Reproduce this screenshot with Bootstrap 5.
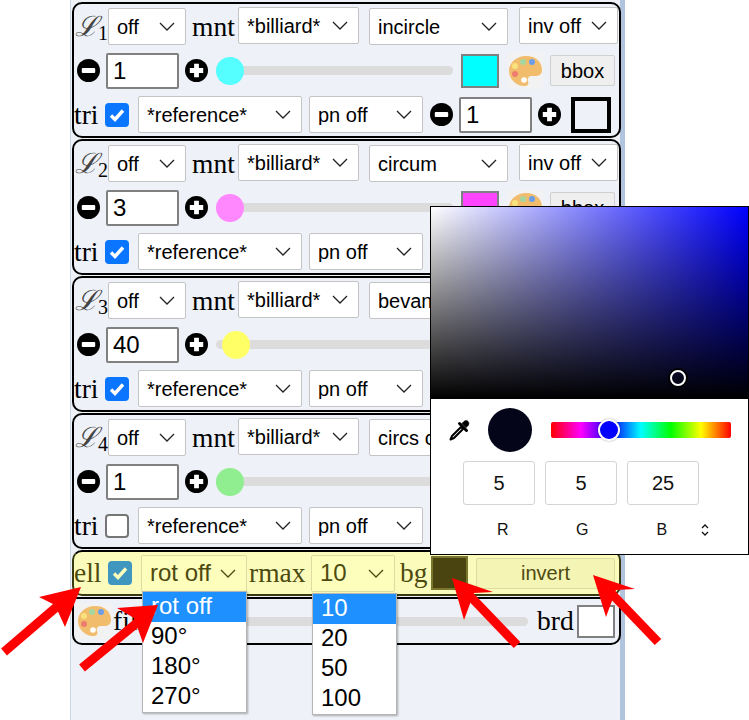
<!DOCTYPE html>
<html lang="en">
  <head>
    <meta charset="UTF-8" />
    <meta name="viewport" content="width=device-width, initial-scale=1.0" />
    <title>Locus controls</title>
    <link
      href="https://cdn.jsdelivr.net/npm/bootstrap@5.3.0/dist/css/bootstrap.min.css"
      rel="stylesheet"
    />
    <style>
      body {
        margin: 0;
        background: #fff;
        overflow: hidden;
        font-family: "Liberation Sans", Arial, sans-serif;
      }
      .stage { position: relative; width: 749px; height: 720px; overflow: hidden; }
      .sidebar {
        margin-left: 70px;
        width: 555px;
        height: 720px;
        padding: 2px 0 0 1px;
        background: #eef1f7;
        border-left: 1px solid #c9d6ea;
        border-right: 5px solid #b0c4de;
      }
      .locus {
        width: 549px;
        height: 136px;
        margin-bottom: 1px;
        padding: 4px 0 0 0;
        border: 2px solid #000;
        border-radius: 10px;
        display: flex;
        flex-direction: column;
        gap: 7px;
      }
      .ctl-row { height: 37px; display: flex; align-items: center; flex: none; }
      .serif-lbl { font-family: "Liberation Serif", "Times New Roman", serif; font-size: 27.5px; line-height: 1; color: #000; }
      .locus-name { width: 34px; padding-left: 1px; white-space: nowrap; }
      .locus-name i { font-family: "DejaVu Serif", serif; font-size: 28px; color: #444; }
      .locus-name sub { font-size: 20px; bottom: -.2em; }

      .form-select.pick {
        height: 37px;
        flex: none;
        padding: 0 24px 0 8px;
        font-size: 20px;
        line-height: 1;
        color: #000;
        border: 1px solid #c4c4c4;
        border-radius: 2px;
        background-size: 16px 9px;
        background-position: right 10px center;
        background-image: url("data:image/svg+xml,%3csvg xmlns='http://www.w3.org/2000/svg' viewBox='0 0 16 9'%3e%3cpath fill='none' stroke='%23222' stroke-width='1.3' d='M1 1l7 7 7-7'/%3e%3c/svg%3e");
      }
      .sel-on { width: 78px; }
      .sel-mount { width: 121px; margin-right: 10px; transform: translateY(-1px); }
      .sel-kind { width: 139px; margin-right: 11px; }
      .sel-inv { width: 99px; transform: translateY(-1px); }
      .sel-ref { width: 164px; margin-right: 7px; }
      .sel-pn { width: 114px; margin-right: 7px; }
      .mnt-lbl { margin: 0 4px 0 6px; width: 42px; }

      .stepper { flex: none; display: block; width: 23px; height: 23px; }
      .lead-step { margin-left: 3px; }
      .num-box.form-control {
        width: 73px;
        height: 36px;
        flex: none;
        margin: 0 6px;
        padding: 0 5px;
        font-size: 24px;
        color: #000;
        border: 2px solid #808080;
        border-radius: 2px;
      }
      .size-range {
        flex: none;
        appearance: none;
        -webkit-appearance: none;
        background: transparent;
        height: 28px;
        margin: 0;
      }
      .size-range::-webkit-slider-runnable-track { height: 9px; background: #dcdcdc; border-radius: 5px; }
      .size-range::-webkit-slider-thumb {
        -webkit-appearance: none;
        width: 28px;
        height: 28px;
        margin-top: -9.5px;
        border-radius: 50%;
        background: var(--thumb);
      }
      .locus .size-range { width: 237px; margin: 0 8px; }
      .th-cyan { --thumb: #55ffff; }
      .th-pink { --thumb: #ff88ff; }
      .th-yellow { --thumb: #ffff66; }
      .th-green { --thumb: #90ee90; }
      .th-grey { --thumb: #dcdcdc; }

      .swatch { flex: none; width: 38px; height: 34px; border: 2px solid #808080; }
      .sw-cyan { background: #00ffff; }
      .sw-pink { background: #ff44ff; }
      .paint { flex: none; width: 36px; height: 36px; display: block; background: #f2f2f2; }
      .swatch + .paint { margin-left: 8px; }
      .btn.bbox-btn {
        flex: none;
        width: 65px;
        height: 31px;
        padding: 0;
        margin-left: 7px;
        font-size: 20px;
        line-height: 1;
        color: #000;
        background: #efefef;
        border: 1px solid #d0d0d0;
        border-radius: 2px;
      }
      .tri-lbl { width: 31px; }
      .form-check-input.tick {
        flex: none;
        width: 24px;
        height: 24px;
        margin: 0 9px 0 0;
        border: 2px solid #767676;
        border-radius: 4px;
        background-color: #fff;
      }
      .form-check-input.tick:checked {
        background-color: #0a75ff;
        border-color: #0a75ff;
        background-size: 100% 100%;
        background-image: url("data:image/svg+xml,%3csvg xmlns='http://www.w3.org/2000/svg' viewBox='0 0 20 20'%3e%3cpath fill='none' stroke='%23fff' stroke-width='3.4' d='M4 10.500l4 4 8-9'/%3e%3c/svg%3e");
      }
      .edge-box { flex: none; width: 40px; height: 36px; margin-left: 10px; border: 4px solid #000; background: #eef1f7; }

      .ell-bar {
        width: 549px;
        height: 46px;
        display: flex;
        align-items: center;
        color: #4d4a10;
        background: #fbfcbb;
        border: 2px solid #3a3a10;
        border-top-color: #000;
        border-radius: 10px;
      }
      .ell-bar .serif-lbl { color: #4d4a10; }
      .ell-bar .form-select.pick {
        font-size: 24px;
        color: #4d4a10;
        background-color: #fdfdbc;
        border-color: #dcdca0;
        background-image: url("data:image/svg+xml,%3csvg xmlns='http://www.w3.org/2000/svg' viewBox='0 0 16 9'%3e%3cpath fill='none' stroke='%234d4a10' stroke-width='1.3' d='M1 1l7 7 7-7'/%3e%3c/svg%3e");
      }
      .ell-lbl { width: 34px; }
      .form-check-input.tick.ell-tick:checked {
        background-color: #3f96bf;
        border-color: #3f96bf;
        background-image: url("data:image/svg+xml,%3csvg xmlns='http://www.w3.org/2000/svg' viewBox='0 0 20 20'%3e%3cpath fill='none' stroke='%23fdfdbc' stroke-width='3.4' d='M4 10.500l4 4 8-9'/%3e%3c/svg%3e");
      }
      .sel-rot { width: 106px; }
      .rmax-lbl { margin: 0 5px 0 2px; width: 57px; }
      .sel-rmax { width: 84px; }
      .bg-lbl { margin: 0 4px 0 5px; width: 27px; }
      .bg-box { flex: none; width: 37px; height: 34px; background: #4a4510; border: 2px solid #7a7630; }
      .btn.inv-btn {
        flex: none;
        width: 139px;
        height: 31px;
        margin-left: 8px;
        padding: 0;
        font-size: 20px;
        line-height: 1;
        color: #4d4a10;
        background: #f4f4b4;
        border: 1px solid #dcdca0;
        border-radius: 2px;
      }
      .fill-bar {
        width: 549px;
        height: 48px;
        margin-top: 1px;
        padding-left: 2px;
        display: flex;
        align-items: center;
        border: 2px solid #000;
        border-radius: 0 0 10px 10px;
      }
      .fill-bar .size-range { width: 385px; margin-right: 9px; }
      .fill-lbl { width: 30px; margin-left: 1px; }
      .brd-lbl { width: 40px; }
      .brd-box { flex: none; width: 38px; height: 33px; background: #fff; border: 2px solid #808080; }

      /* popups of the open selects and colour picker */
      .fake-menu {
        position: absolute;
        background: #fff;
        border: 1px solid #b5b5b5;
        box-shadow: 1px 1px 2px rgba(0, 0, 0, .3);
        font-size: 24px;
        color: #000;
      }
      .fake-menu div { height: 30px; line-height: 28px; padding-left: 8px; }
      .fake-menu .on { background: #1e90ff; color: #fff; }
      .menu-rot { left: 142px; top: 591px; width: 105px; }
      .menu-rmax { left: 312px; top: 593px; width: 85px; }

      .picker {
        position: absolute;
        left: 430px;
        top: 206px;
        width: 319px;
        height: 349px;
        background: #fff;
        border: 1px solid #000;
      }
      .sv-field {
        position: relative;
        height: 192px;
        background: linear-gradient(to top, #000, transparent), linear-gradient(to right, #fff, #00f);
      }
      .sv-dot {
        position: absolute;
        left: 239px;
        top: 163px;
        width: 16px;
        height: 16px;
        border-radius: 50%;
        border: 2.5px solid #fff;
        box-shadow: 0 0 0 2px #000;
      }
      .pick-top { height: 62px; padding-left: 18px; display: flex; align-items: center; }
      .dropper { width: 21px; height: 21px; flex: none; }
      .now-col { width: 44px; height: 44px; flex: none; margin-left: 18px; border-radius: 50%; background: #050519; }
      .hue-bar {
        position: relative;
        width: 180px;
        height: 16px;
        margin-left: 19px;
        border-radius: 2px;
        background: linear-gradient(to right, #f00, #f0f 16.6%, #00f 33.3%, #0ff 50%, #0f0 66.6%, #ff0 83.3%, #f00);
      }
      .hue-dot {
        position: absolute;
        left: 47px;
        top: -3px;
        width: 22px;
        height: 22px;
        border-radius: 50%;
        background: #00f;
        border: 2.5px solid #fff;
        box-shadow: 0 0 2px rgba(0, 0, 0, .4);
      }
      .rgb-row { display: flex; gap: 10px; padding-left: 32px; }
      .rgb-cell {
        width: 72px;
        height: 44px;
        line-height: 42px;
        text-align: center;
        font-size: 20px;
        color: #111;
        border: 1px solid #d4d4d4;
        border-radius: 3px;
      }
      .rgb-names { display: flex; padding-left: 32px; margin-top: 15px; font-size: 16px; line-height: 20px; color: #111; }
      .rgb-names span { width: 79.5px; text-align: center; }
      .updown { display: block; width: 8px; height: 14px; margin: 3px 0 0 -1px; }
      .arrows { position: absolute; left: 0; top: 0; pointer-events: none; }
    </style>
  </head>
  <body>
    <div class="stage">
      <div class="sidebar">
        <svg width="0" height="0" class="position-absolute">
          <symbol id="ico-minus" viewBox="0 0 24 24">
            <circle cx="12" cy="12" r="12" fill="#000" />
            <rect x="5" y="9.5" width="14" height="5" rx="1" fill="#fff" />
          </symbol>
          <symbol id="ico-plus" viewBox="0 0 24 24">
            <circle cx="12" cy="12" r="12" fill="#000" />
            <path d="M5 9.5h4.500v-4.500h5v4.500h4.500v5h-4.500v4.500h-5v-4.500h-4.500z" fill="#fff" />
          </symbol>
          <symbol id="ico-paint" viewBox="0 0 36 36">
            <path d="M19 3C9 3 2 10 2 18c0 8 7 15 15 15 4 0 5-2 4-5-1-3 1-5 4-5h4c4 0 6-3 6-6C35 9 29 3 19 3z" fill="#f1bd6c" />
            <circle cx="16" cy="9" r="3" fill="#a5d6a0" />
            <circle cx="25" cy="9" r="3" fill="#6c9ee8" />
            <circle cx="8" cy="13" r="3" fill="#f7e27c" />
            <circle cx="8" cy="21" r="3" fill="#ee7b6f" />
            <circle cx="17" cy="27" r="2.800" fill="#fff" />
          </symbol>
        </svg>

        <!-- L1 -->
        <div class="locus">
          <div class="ctl-row">
            <span class="serif-lbl locus-name"><i>ℒ</i><sub>1</sub></span>
            <select class="form-select pick sel-on"><option>off</option></select>
            <span class="serif-lbl mnt-lbl">mnt</span>
            <select class="form-select pick sel-mount"><option>*billiard*</option></select>
            <select class="form-select pick sel-kind"><option>incircle</option></select>
            <select class="form-select pick sel-inv"><option>inv off</option></select>
          </div>
          <div class="ctl-row">
            <svg class="stepper lead-step"><use href="#ico-minus" /></svg>
            <input class="form-control num-box" value="1" />
            <svg class="stepper"><use href="#ico-plus" /></svg>
            <input type="range" class="size-range th-cyan" value="0" />
            <div class="swatch sw-cyan"></div>
            <svg class="paint"><use href="#ico-paint" /></svg>
            <button class="btn bbox-btn">bbox</button>
          </div>
          <div class="ctl-row">
            <span class="serif-lbl tri-lbl">tri</span>
            <input type="checkbox" class="form-check-input tick" checked />
            <select class="form-select pick sel-ref"><option>*reference*</option></select>
            <select class="form-select pick sel-pn"><option>pn off</option></select>
            <svg class="stepper"><use href="#ico-minus" /></svg>
            <input class="form-control num-box" value="1" />
            <svg class="stepper"><use href="#ico-plus" /></svg>
            <div class="edge-box"></div>
          </div>
        </div>

        <!-- L2 -->
        <div class="locus">
          <div class="ctl-row">
            <span class="serif-lbl locus-name"><i>ℒ</i><sub>2</sub></span>
            <select class="form-select pick sel-on"><option>off</option></select>
            <span class="serif-lbl mnt-lbl">mnt</span>
            <select class="form-select pick sel-mount"><option>*billiard*</option></select>
            <select class="form-select pick sel-kind"><option>circum</option></select>
            <select class="form-select pick sel-inv"><option>inv off</option></select>
          </div>
          <div class="ctl-row">
            <svg class="stepper lead-step"><use href="#ico-minus" /></svg>
            <input class="form-control num-box" value="3" />
            <svg class="stepper"><use href="#ico-plus" /></svg>
            <input type="range" class="size-range th-pink" value="0" />
            <div class="swatch sw-pink"></div>
            <svg class="paint"><use href="#ico-paint" /></svg>
            <button class="btn bbox-btn">bbox</button>
          </div>
          <div class="ctl-row">
            <span class="serif-lbl tri-lbl">tri</span>
            <input type="checkbox" class="form-check-input tick" checked />
            <select class="form-select pick sel-ref"><option>*reference*</option></select>
            <select class="form-select pick sel-pn"><option>pn off</option></select>
          </div>
        </div>

        <!-- L3 -->
        <div class="locus">
          <div class="ctl-row">
            <span class="serif-lbl locus-name"><i>ℒ</i><sub>3</sub></span>
            <select class="form-select pick sel-on"><option>off</option></select>
            <span class="serif-lbl mnt-lbl">mnt</span>
            <select class="form-select pick sel-mount"><option>*billiard*</option></select>
            <select class="form-select pick sel-kind"><option>bevan</option></select>
          </div>
          <div class="ctl-row">
            <svg class="stepper lead-step"><use href="#ico-minus" /></svg>
            <input class="form-control num-box" value="40" />
            <svg class="stepper"><use href="#ico-plus" /></svg>
            <input type="range" class="size-range th-yellow" value="3" />
          </div>
          <div class="ctl-row">
            <span class="serif-lbl tri-lbl">tri</span>
            <input type="checkbox" class="form-check-input tick" checked />
            <select class="form-select pick sel-ref"><option>*reference*</option></select>
            <select class="form-select pick sel-pn"><option>pn off</option></select>
          </div>
        </div>

        <!-- L4 -->
        <div class="locus">
          <div class="ctl-row">
            <span class="serif-lbl locus-name"><i>ℒ</i><sub>4</sub></span>
            <select class="form-select pick sel-on"><option>off</option></select>
            <span class="serif-lbl mnt-lbl">mnt</span>
            <select class="form-select pick sel-mount"><option>*billiard*</option></select>
            <select class="form-select pick sel-kind"><option>circs c</option></select>
          </div>
          <div class="ctl-row">
            <svg class="stepper lead-step"><use href="#ico-minus" /></svg>
            <input class="form-control num-box" value="1" />
            <svg class="stepper"><use href="#ico-plus" /></svg>
            <input type="range" class="size-range th-green" value="0" />
          </div>
          <div class="ctl-row">
            <span class="serif-lbl tri-lbl">tri</span>
            <input type="checkbox" class="form-check-input tick" />
            <select class="form-select pick sel-ref"><option>*reference*</option></select>
            <select class="form-select pick sel-pn"><option>pn off</option></select>
          </div>
        </div>

        <!-- ellipse bar -->
        <div class="ell-bar">
          <span class="serif-lbl ell-lbl">ell</span>
          <input type="checkbox" class="form-check-input tick ell-tick" checked />
          <select class="form-select pick sel-rot"><option>rot off</option></select>
          <span class="serif-lbl rmax-lbl">rmax</span>
          <select class="form-select pick sel-rmax"><option>10</option></select>
          <span class="serif-lbl bg-lbl">bg</span>
          <div class="bg-box"></div>
          <button class="btn inv-btn">invert</button>
        </div>

        <div class="fill-bar">
          <svg class="paint"><use href="#ico-paint" /></svg>
          <span class="serif-lbl fill-lbl">fill</span>
          <input type="range" class="size-range th-grey" value="0" />
          <span class="serif-lbl brd-lbl">brd</span>
          <div class="brd-box"></div>
        </div>
      </div>

      <div class="fake-menu menu-rot">
        <div class="on">rot off</div>
        <div>90°</div>
        <div>180°</div>
        <div>270°</div>
      </div>
      <div class="fake-menu menu-rmax">
        <div class="on">10</div>
        <div>20</div>
        <div>50</div>
        <div>100</div>
      </div>

      <!-- colour picker -->
      <div class="picker">
        <div class="sv-field"><div class="sv-dot"></div></div>
        <div class="pick-top">
          <svg class="dropper" viewBox="0 0 21 21">
            <path d="M13 3.500l2-2c1.200-1 3-1 4 0s1 2.800 0 4l-2 2z" fill="#000" stroke="#000" stroke-width="1" />
            <path d="M10.500 3.500l7 7" fill="none" stroke="#000" stroke-width="3" stroke-linecap="round" />
            <path d="M12 7L3 16l-1.500 3.500L5 18l9-9z" fill="#fff" stroke="#000" stroke-width="2" stroke-linejoin="round" />
          </svg>
          <div class="now-col"></div>
          <div class="hue-bar"><div class="hue-dot"></div></div>
        </div>
        <div class="rgb-row">
          <div class="rgb-cell">5</div>
          <div class="rgb-cell">5</div>
          <div class="rgb-cell">25</div>
        </div>
        <div class="rgb-names">
          <span>R</span><span>G</span><span>B</span>
          <svg class="updown" viewBox="0 0 8 14">
            <path d="M1 5l3-3 3 3M1 9l3 3 3-3" fill="none" stroke="#111" stroke-width="1.300" />
          </svg>
        </div>
      </div>

      <!-- red arrows -->
      <svg class="arrows" width="749" height="720" viewBox="0 0 749 720">
        <g stroke="#f00" stroke-width="9" fill="#f00">
          <line x1="4" y1="652" x2="60" y2="604" />
          <line x1="82" y1="668" x2="138" y2="622" />
          <line x1="517" y1="645" x2="470" y2="596" />
          <line x1="658" y1="642" x2="611" y2="593" />
        </g>
        <g fill="#f00">
          <polygon points="81,587 39,597 55,605 65,627" />
          <polygon points="158,605 117,608 134,618 143,643" />
          <polygon points="452,578 493,592 474,593 464,620" />
          <polygon points="593,575 635,589 616,590 606,617" />
        </g>
      </svg>
    </div>
    <script src="https://cdn.jsdelivr.net/npm/bootstrap@5.3.0/dist/js/bootstrap.bundle.min.js"></script>
  </body>
</html>
